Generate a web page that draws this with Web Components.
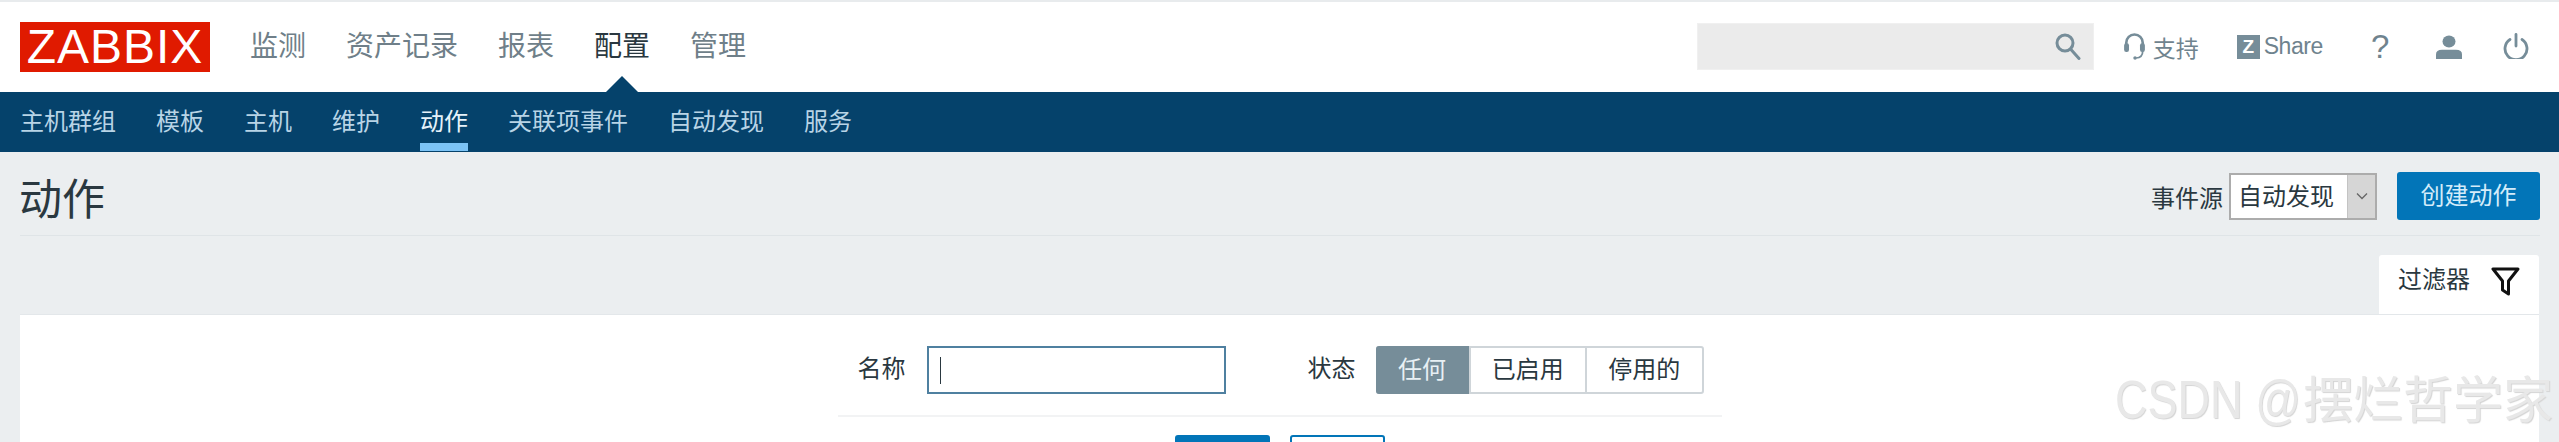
<!DOCTYPE html>
<html lang="zh">
<head>
<meta charset="utf-8">
<title>动作</title>
<style>
    html, body {
        margin: 0;
        height: 442px;
        overflow: hidden;
        background: #ebeef0;
        font-family: "Liberation Sans", "Noto Sans CJK SC", sans-serif;
    }
</style>
</head>
<body>
<z-topbar>
    <z-menu-item>监测</z-menu-item>
    <z-menu-item>资产记录</z-menu-item>
    <z-menu-item>报表</z-menu-item>
    <z-menu-item active>配置</z-menu-item>
    <z-menu-item>管理</z-menu-item>
</z-topbar>
<z-subnav>
    <z-sub-item>主机群组</z-sub-item>
    <z-sub-item>模板</z-sub-item>
    <z-sub-item>主机</z-sub-item>
    <z-sub-item>维护</z-sub-item>
    <z-sub-item active>动作</z-sub-item>
    <z-sub-item>关联项事件</z-sub-item>
    <z-sub-item>自动发现</z-sub-item>
    <z-sub-item>服务</z-sub-item>
</z-subnav>
<z-title-bar heading="动作"></z-title-bar>
<z-filter></z-filter>
<z-watermark latin="CSDN @" name="摆烂哲学家"></z-watermark>

<script>
const FONT = '"Liberation Sans", "Noto Sans CJK SC", sans-serif';

class ZTopbar extends HTMLElement {
    constructor() {
        super();
        this.attachShadow({ mode: 'open' });
    }

    connectedCallback() {
        this.shadowRoot.innerHTML = `
            <style>
                :host {
                    display: flex;
                    align-items: center;
                    box-sizing: border-box;
                    height: 92px;
                    padding: 2px 30px 0 20px;
                    background: #fff;
                    border-top: 2px solid #e8ebed;
                    font-family: ${FONT};
                    color: #6f838e;
                }
                .logo {
                    width: 190px;
                    height: 50px;
                    margin-top: -3px;
                    background: #e01a00;
                    color: #fff;
                    font-size: 48px;
                    line-height: 50px;
                    letter-spacing: 1px;
                    text-align: center;
                }
                nav {
                    display: flex;
                    gap: 40px;
                    margin-left: 40px;
                }
                .tools {
                    display: flex;
                    align-items: center;
                    margin-left: auto;
                    margin-top: -3px;
                }
                .search {
                    display: flex;
                    align-items: center;
                    justify-content: flex-end;
                    box-sizing: border-box;
                    width: 397px;
                    height: 47px;
                    padding-right: 12px;
                    background: #ebebeb;
                    border: 1px solid #f0f0f0;
                }
                .support {
                    display: flex;
                    align-items: center;
                    gap: 7px;
                    margin-left: 29px;
                    font-size: 23px;
                }
                .share {
                    display: flex;
                    align-items: center;
                    gap: 4px;
                    margin-left: 38px;
                    font-size: 23px;
                    letter-spacing: -0.4px;
                }
                .zbox {
                    width: 23px;
                    height: 24px;
                    background: #768d99;
                    color: #fff;
                    font-size: 19px;
                    font-weight: bold;
                    line-height: 24px;
                    text-align: center;
                }
                .help {
                    width: 14px;
                    margin-left: 48px;
                    font-size: 33px;
                    line-height: 34px;
                    text-align: center;
                }
                .user { margin-left: 51px; }
                .power { margin-left: 41px; }
                svg { display: block; }
            </style>
            <div class="logo">ZABBIX</div>
            <nav><slot></slot></nav>
            <div class="tools">
                <div class="search">
                    <svg width="26" height="27" viewBox="0 0 26 27" fill="none" stroke="#768d99" stroke-width="3">
                        <circle cx="10" cy="10" r="8"/>
                        <path d="M15.5 16 L24 25.5" stroke-linecap="round"/>
                    </svg>
                </div>
                <div class="support">
                    <svg width="23" height="29" viewBox="0 0 21 26" fill="none" stroke="#768d99">
                        <path d="M3 13 V9.5 a7.5 7.5 0 0 1 15 0 V13" stroke-width="2.4"/>
                        <rect x="1" y="10" width="4.5" height="8" rx="2" fill="#768d99" stroke="none"/>
                        <rect x="15.5" y="10" width="4.5" height="8" rx="2" fill="#768d99" stroke="none"/>
                        <path d="M18 17 q0 6 -6 6.5" stroke-width="1.6"/>
                        <circle cx="11" cy="23.5" r="1.6" fill="#768d99" stroke="none"/>
                    </svg>
                    <span>支持</span>
                </div>
                <div class="share"><span class="zbox">Z</span><span>Share</span></div>
                <div class="help">?</div>
                <div class="user">
                    <svg width="26" height="24" viewBox="0 0 26 26" fill="#768d99" preserveAspectRatio="none">
                        <circle cx="13" cy="7" r="6.5"/>
                        <path d="M0 26 V21 Q0 16 6 16 H20 Q26 16 26 21 V26 Z"/>
                    </svg>
                </div>
                <div class="power">
                    <svg width="26" height="26" viewBox="0 0 26 26" fill="none" stroke="#768d99" stroke-width="2.8" stroke-linecap="round" style="margin-top:-2px">
                        <path d="M7 6.5 A11 11 0 1 0 19 6.5"/>
                        <path d="M13 1.5 V13"/>
                    </svg>
                </div>
            </div>
        `;
    }
}

class ZMenuItem extends HTMLElement {
    constructor() {
        super();
        this.attachShadow({ mode: 'open' });
        this.shadowRoot.innerHTML = `
            <style>
                :host {
                    display: block;
                    position: relative;
                    font-size: 28px;
                    line-height: 40px;
                    margin-top: -3px;
                    color: #6f7f89;
                }
                :host([active]) { color: #2a3840; }
                :host([active])::after {
                    content: '';
                    position: absolute;
                    left: 50%;
                    top: 49px;
                    margin-left: -16px;
                    border-left: 16px solid transparent;
                    border-right: 16px solid transparent;
                    border-bottom: 16px solid #05426b;
                }
            </style>
            <slot></slot>
        `;
    }
}

class ZSubnav extends HTMLElement {
    constructor() {
        super();
        this.attachShadow({ mode: 'open' });
        this.shadowRoot.innerHTML = `
            <style>
                :host {
                    display: flex;
                    gap: 40px;
                    box-sizing: border-box;
                    height: 60px;
                    padding: 0 20px;
                    background: #05426b;
                    font-family: ${FONT};
                }
            </style>
            <slot></slot>
        `;
    }
}

class ZSubItem extends HTMLElement {
    constructor() {
        super();
        this.attachShadow({ mode: 'open' });
        this.shadowRoot.innerHTML = `
            <style>
                :host {
                    display: block;
                    box-sizing: border-box;
                    height: 59px;
                    padding-top: 12px;
                    font-size: 24px;
                    line-height: 36px;
                    color: #b8d4e6;
                }
                :host([active]) {
                    color: #e6f2fa;
                    border-bottom: 8px solid #7cc3f5;
                }
            </style>
            <slot></slot>
        `;
    }
}

class ZTitleBar extends HTMLElement {
    constructor() {
        super();
        this.attachShadow({ mode: 'open' });
    }

    connectedCallback() {
        this.shadowRoot.innerHTML = `
            <style>
                :host {
                    display: flex;
                    align-items: center;
                    box-sizing: border-box;
                    height: 84px;
                    margin: 0 19px 0 20px;
                    padding-top: 20px;
                    padding-bottom: 15px;
                    border-bottom: 1px solid #dfe4e7;
                    font-family: ${FONT};
                    color: #2a3840;
                }
                h1 {
                    margin: 8px 0 0 -1px;
                    font-size: 43px;
                    font-weight: 400;
                    line-height: 48px;
                }
                .controls {
                    display: flex;
                    align-items: center;
                    margin-left: auto;
                }
                .label { font-size: 24px; margin-right: 6px; }
                .select {
                    display: flex;
                    box-sizing: border-box;
                    width: 148px;
                    height: 47px;
                    background: #fff;
                    border: 2px solid #acacac;
                    font-size: 24px;
                    line-height: 43px;
                }
                .select span { flex: 1; padding-left: 7px; }
                .arrow {
                    display: flex;
                    align-items: center;
                    justify-content: center;
                    width: 27px;
                    background: #d6d6d6;
                    border-left: 1px solid #c4c4c4;
                }
                .create {
                    width: 143px;
                    height: 48px;
                    margin-left: 20px;
                    background: #0275b8;
                    color: #d4ecfa;
                    border-radius: 3px;
                    font-size: 24px;
                    line-height: 47px;
                    text-align: center;
                }
            </style>
            <h1>${this.getAttribute('heading')}</h1>
            <div class="controls">
                <span class="label">事件源</span>
                <div class="select">
                    <span>自动发现</span>
                    <div class="arrow">
                        <svg width="12" height="8" viewBox="0 0 12 8" fill="none" stroke="#666" stroke-width="1.3"><path d="M1 1.5 L6 6.5 L11 1.5"/></svg>
                    </div>
                </div>
                <div class="create">创建动作</div>
            </div>
        `;
    }
}

class ZFilter extends HTMLElement {
    constructor() {
        super();
        this.attachShadow({ mode: 'open' });
    }

    connectedCallback() {
        this.shadowRoot.innerHTML = `
            <style>
                :host {
                    display: block;
                    margin: 19px 20px 0 20px;
                    font-family: ${FONT};
                    font-size: 24px;
                    color: #2a3840;
                }
                .tabs {
                    display: flex;
                    justify-content: flex-end;
                }
                .tab {
                    display: flex;
                    align-items: flex-start;
                    justify-content: space-between;
                    box-sizing: border-box;
                    width: 160px;
                    height: 59px;
                    padding: 8px 19px 0 19px;
                    background: #fff;
                    border-radius: 3px 3px 0 0;
                    line-height: 34px;
                }
                .tab svg { margin-top: 4px; }
                .panel {
                    height: 128px;
                    overflow: hidden;
                    background: #fff;
                    border-top: 1px solid #e3e7ea;
                    box-sizing: border-box;
                    padding-top: 31px;
                }
                .form {
                    width: 884px;
                    margin: 0 auto;
                }
                .row {
                    display: flex;
                    align-items: flex-start;
                    height: 69px;
                    padding: 0 0 0 20px;
                    border-bottom: 2px solid #f2f3f4;
                }
                .row > * { flex: none; }
                .row label { width: 50px; margin-right: 19px; line-height: 46px; }
                .input {
                    box-sizing: border-box;
                    width: 299px;
                    height: 48px;
                    margin-right: 82px;
                    padding: 9px 0 0 11px;
                    border: 2px solid #4f80a0;
                    background: #fff;
                }
                .caret { width: 1px; height: 27px; background: #2a3840; }
                .row label.state { margin-right: 18px; }
                .seg {
                    display: flex;
                    box-sizing: border-box;
                    width: 328px;
                    height: 48px;
                    border: 2px solid #cfd5d9;
                    border-radius: 3px;
                    text-align: center;
                    line-height: 43px;
                }
                .seg div { flex: 1; }
                .seg div + div { border-left: 2px solid #cfd5d9; }
                .seg .on {
                    flex: 0 0 93px;
                    margin: -2px 0 -2px -2px;
                    background: #768d99;
                    color: #e8f0f4;
                    line-height: 47px;
                    border-radius: 3px 0 0 3px;
                }
                .actions {
                    display: flex;
                    justify-content: center;
                    gap: 20px;
                    margin-top: 18px;
                }
                .btn {
                    box-sizing: border-box;
                    width: 95px;
                    height: 48px;
                    border-radius: 3px;
                    border: 2px solid #0275b8;
                    background: #0275b8;
                }
                .btn.alt { background: #fff; }
            </style>
            <div class="tabs">
                <div class="tab">
                    <span>过滤器</span>
                    <svg width="29" height="29" viewBox="0 0 29 29" fill="none" stroke="#111" stroke-width="3" stroke-linejoin="round">
                        <path d="M2 2 H27 L17.5 14 V27 L11.5 23 V14 Z"/>
                    </svg>
                </div>
            </div>
            <div class="panel">
                <div class="form">
                    <div class="row">
                        <label>名称</label>
                        <div class="input"><div class="caret"></div></div>
                        <label class="state">状态</label>
                        <div class="seg"><div class="on">任何</div><div>已启用</div><div>停用的</div></div>
                    </div>
                    <div class="actions">
                        <div class="btn"></div>
                        <div class="btn alt"></div>
                    </div>
                </div>
            </div>
        `;
    }
}

class ZWatermark extends HTMLElement {
    constructor() {
        super();
        this.attachShadow({ mode: 'open' });
    }

    connectedCallback() {
        this.shadowRoot.innerHTML = `
            <style>
                :host {
                    display: flex;
                    align-items: baseline;
                    position: absolute;
                    left: 2115px;
                    top: 369px;
                    font-family: ${FONT};
                    line-height: 62px;
                    white-space: nowrap;
                    color: #e8e8e8;
                    text-shadow: 1px 1px 1px #d4d4d4;
                }
                .latin {
                    width: 188px;
                    font-size: 53px;
                    transform: scaleX(0.85);
                    transform-origin: left;
                }
                .name { font-size: 50px; }
            </style>
            <span class="latin">${this.getAttribute('latin')}</span>
            <span class="name">${this.getAttribute('name')}</span>
        `;
    }
}

customElements.define('z-topbar', ZTopbar);
customElements.define('z-menu-item', ZMenuItem);
customElements.define('z-subnav', ZSubnav);
customElements.define('z-sub-item', ZSubItem);
customElements.define('z-title-bar', ZTitleBar);
customElements.define('z-filter', ZFilter);
customElements.define('z-watermark', ZWatermark);
</script>
</body>
</html>
